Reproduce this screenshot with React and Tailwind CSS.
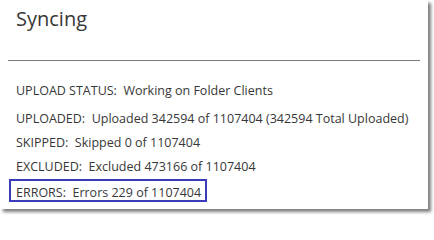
import React from 'react';

const rows = [
    { label: 'UPLOAD STATUS:', value: 'Working on Folder Clients' },
    { label: 'UPLOADED:', value: 'Uploaded 342594 of 1107404 (342594 Total Uploaded)' },
    { label: 'SKIPPED:', value: 'Skipped 0 of 1107404' },
    { label: 'EXCLUDED:', value: 'Excluded 473166 of 1107404' },
];

const App = () => {
    return (
        <div className="w-[434px] h-[219px] bg-white overflow-hidden text-[#373737]" style={{ fontFamily: '"Open Sans", "Noto Sans", sans-serif' }}>
            <div className="w-[428px] h-[209px] bg-white shadow-[3px_3px_3px_rgba(0,0,0,0.5)] flex flex-col">
                {/* Title */}
                <div className="mt-[5px] ml-4 text-[20px] leading-[28px]">Syncing</div>
                <div className="mt-[27px] ml-2 w-[412px] h-px bg-[#7a7a7a]" />

                {/* Status rows */}
                <div className="mt-[18px] flex flex-col text-[12.5px] leading-[24px] whitespace-pre">
                    {rows.map((r, i) => (
                        <div key={r.label} className={`ml-4 ${i === 1 ? 'mt-[4px]' : ''}`}>
                            {r.label}  {r.value}
                        </div>
                    ))}
                    <div className="ml-[9px] w-fit border-2 border-[#3a3cb8] pl-[5px] pr-[4px] pt-[4px] leading-[15px]">
                        ERRORS:  Errors 229 of 1107404
                    </div>
                </div>
            </div>
        </div>
    );
};

export default App;
